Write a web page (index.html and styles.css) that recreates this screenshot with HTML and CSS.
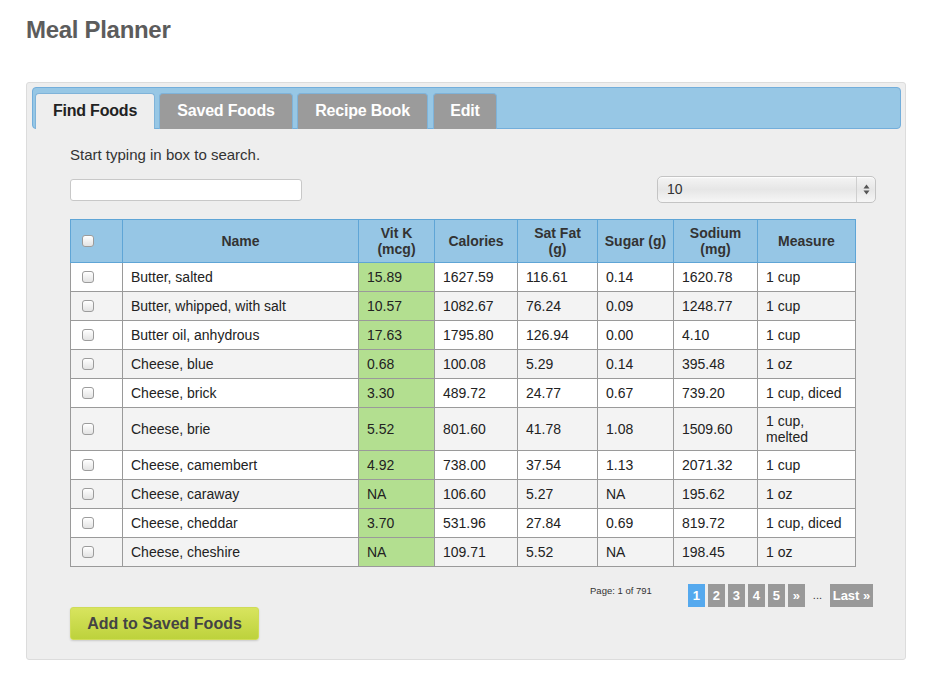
FILE: index.html
```html
<!DOCTYPE html>
<html>
<head>
<meta charset="utf-8">
<title>Meal Planner</title>
<link rel="stylesheet" href="styles.css">
</head>
<body>
<div class="page">
  <h1 class="title">Meal Planner</h1>
  <div class="panel">
    <div class="tabbar">
      <div class="tab active t-find">Find Foods</div>
      <div class="tab t-saved">Saved Foods</div>
      <div class="tab t-recipe">Recipe Book</div>
      <div class="tab t-edit">Edit</div>
    </div>
    <div class="content">
      <p class="hint">Start typing in box to search.</p>
      <div class="controls">
        <input class="search" type="text">
        <div class="select">
          <span class="select-value">10</span>
          <span class="select-arrows">
            <svg width="7" height="11" viewBox="0 0 7 11"><path d="M3.5 0.5 L6.5 4.5 L0.5 4.5 Z" fill="#555"/><path d="M3.5 10.5 L6.5 6.5 L0.5 6.5 Z" fill="#555"/></svg>
          </span>
        </div>
      </div>
      <table class="foods">
        <colgroup>
          <col class="c-check"><col class="c-name"><col class="c-vitk"><col class="c-cal"><col class="c-fat"><col class="c-sugar"><col class="c-sod"><col class="c-meas">
        </colgroup>
        <thead>
          <tr>
            <th class="chk"><input type="checkbox" class="cb"></th>
            <th>Name</th>
            <th>Vit K<br>(mcg)</th>
            <th>Calories</th>
            <th>Sat Fat<br>(g)</th>
            <th>Sugar (g)</th>
            <th>Sodium<br>(mg)</th>
            <th>Measure</th>
          </tr>
        </thead>
        <tbody>
          <tr><td class="chk"><input type="checkbox" class="cb"></td><td>Butter, salted</td><td class="vitk">15.89</td><td>1627.59</td><td>116.61</td><td>0.14</td><td>1620.78</td><td>1 cup</td></tr>
          <tr><td class="chk"><input type="checkbox" class="cb"></td><td>Butter, whipped, with salt</td><td class="vitk">10.57</td><td>1082.67</td><td>76.24</td><td>0.09</td><td>1248.77</td><td>1 cup</td></tr>
          <tr><td class="chk"><input type="checkbox" class="cb"></td><td>Butter oil, anhydrous</td><td class="vitk">17.63</td><td>1795.80</td><td>126.94</td><td>0.00</td><td>4.10</td><td>1 cup</td></tr>
          <tr><td class="chk"><input type="checkbox" class="cb"></td><td>Cheese, blue</td><td class="vitk">0.68</td><td>100.08</td><td>5.29</td><td>0.14</td><td>395.48</td><td>1 oz</td></tr>
          <tr><td class="chk"><input type="checkbox" class="cb"></td><td>Cheese, brick</td><td class="vitk">3.30</td><td>489.72</td><td>24.77</td><td>0.67</td><td>739.20</td><td>1 cup, diced</td></tr>
          <tr><td class="chk"><input type="checkbox" class="cb"></td><td>Cheese, brie</td><td class="vitk">5.52</td><td>801.60</td><td>41.78</td><td>1.08</td><td>1509.60</td><td>1 cup, melted</td></tr>
          <tr><td class="chk"><input type="checkbox" class="cb"></td><td>Cheese, camembert</td><td class="vitk">4.92</td><td>738.00</td><td>37.54</td><td>1.13</td><td>2071.32</td><td>1 cup</td></tr>
          <tr><td class="chk"><input type="checkbox" class="cb"></td><td>Cheese, caraway</td><td class="vitk">NA</td><td>106.60</td><td>5.27</td><td>NA</td><td>195.62</td><td>1 oz</td></tr>
          <tr><td class="chk"><input type="checkbox" class="cb"></td><td>Cheese, cheddar</td><td class="vitk">3.70</td><td>531.96</td><td>27.84</td><td>0.69</td><td>819.72</td><td>1 cup, diced</td></tr>
          <tr><td class="chk"><input type="checkbox" class="cb"></td><td>Cheese, cheshire</td><td class="vitk">NA</td><td>109.71</td><td>5.52</td><td>NA</td><td>198.45</td><td>1 oz</td></tr>
        </tbody>
      </table>
      <div class="pager">
        <span class="page-info">Page: 1 of 791</span>
        <div class="pages">
          <span class="pg current">1</span>
          <span class="pg">2</span>
          <span class="pg">3</span>
          <span class="pg">4</span>
          <span class="pg">5</span>
          <span class="pg">&raquo;</span>
          <span class="dots">...</span>
          <span class="pg last">Last &raquo;</span>
        </div>
      </div>
      <button class="add-btn" type="button">Add to Saved Foods</button>
    </div>
  </div>
</div>
</body>
</html>
```

FILE: styles.css
```css
* { box-sizing: border-box; }
html, body { margin: 0; padding: 0; background: #fff; }
body { font-family: "Liberation Sans", Arial, Helvetica, sans-serif; color: #222; }

.page { padding: 16px 26px 0 26px; width: 932px; }

.title {
  margin: 0;
  font-size: 24px;
  line-height: 28px;
  font-weight: bold;
  color: #5c5c5c;
  letter-spacing: -0.3px;
}

.panel {
  margin-top: 38px;
  width: 880px;
  background: #eeeeee;
  border: 1px solid #dcdcdc;
  border-radius: 3px;
  padding: 4px 4px 19px 5px;
}

.tabbar {
  height: 42px;
  background: #97c7e5;
  border: 1px solid #73aedb;
  border-radius: 4px;
  padding: 5px 0 0 2px;
  display: flex;
  gap: 4px;
  align-items: flex-end;
}

.tab {
  height: 36px;
  margin-bottom: -1px;
  background: #9b9b9b;
  border: 1px solid #7fb3d9;
  border-bottom: none;
  border-radius: 4px 4px 0 0;
  color: #fff;
  font-weight: bold;
  font-size: 16px;
  line-height: 34px;
  text-align: center;
  letter-spacing: -0.2px;
}
.t-find { width: 120px; }
.t-saved { width: 134px; }
.t-recipe { width: 131px; }
.t-edit { width: 64px; margin-left: 1px; }
.tab.active {
  background: #eeeeee;
  color: #222;
}

.content { padding: 0 25px 0 38px; }

.hint {
  margin: 16px 0 0 0;
  font-size: 15px;
  line-height: 20px;
  color: #333;
}

.controls {
  margin-top: 11px;
  display: flex;
  justify-content: space-between;
  align-items: center;
  height: 27px;
}

.search {
  width: 232px;
  height: 22px;
  border: 1px solid #c8c8c8;
  border-radius: 3px;
  background: #fff;
  margin: 0;
  padding: 0 4px;
}

.select {
  width: 219px;
  height: 27px;
  border: 1px solid #c4c4c4;
  border-radius: 5px;
  background: linear-gradient(#f4f4f4, #e6e6e6 50%, #f6f6f6);
  display: flex;
  align-items: stretch;
  box-shadow: inset 0 1px 1px rgba(255,255,255,0.8);
}
.select-value {
  flex: 1;
  font-size: 14px;
  line-height: 25px;
  padding-left: 9px;
  color: #333;
}
.select-arrows {
  width: 19px;
  border-left: 1px solid #cfcfcf;
  display: flex;
  align-items: center;
  justify-content: center;
}

.foods {
  margin-top: 16px;
  border-collapse: collapse;
  table-layout: fixed;
  width: 785px;
  font-size: 14px;
  line-height: 16px;
}
.c-check { width: 52px; }
.c-name { width: 236px; }
.c-vitk { width: 76px; }
.c-cal { width: 83px; }
.c-fat { width: 80px; }
.c-sugar { width: 76px; }
.c-sod { width: 84px; }
.c-meas { width: 98px; }

.foods th {
  background: #96c6e5;
  border: 1px solid #5fa5d6;
  font-weight: bold;
  color: #333;
  padding: 5px 4px;
  height: 43px;
  text-align: center;
}
.foods td {
  border: 1px solid #9a9a9a;
  padding: 5px 8px;
  height: 29px;
  color: #222;
  vertical-align: middle;
}
.foods tbody tr:nth-child(odd) td { background: #fff; }
.foods tbody tr:nth-child(even) td { background: #f3f3f3; }
.foods tbody tr td.vitk { background: #b3df90; }
.foods .chk { text-align: left; padding-left: 11px; padding-right: 0; }

.cb {
  -webkit-appearance: none;
  appearance: none;
  margin: 0;
  display: block;
  width: 12px;
  height: 12px;
  border: 1px solid #9c9c9c;
  border-radius: 3px;
  background: linear-gradient(#ffffff, #e3e3e3);
  box-shadow: inset 0 1px 0 #fff;
}

.pager {
  margin-top: 17px;
  height: 23px;
  display: flex;
  justify-content: flex-end;
  align-items: flex-start;
  padding-right: 3px;
}
.page-info {
  font-size: 9.5px;
  line-height: 12px;
  margin-top: 1px;
  color: #333;
  margin-right: 36px;
}
.pages { display: flex; gap: 3px; align-items: center; }
.pg {
  height: 23px;
  min-width: 17px;
  background: #999999;
  color: #fff;
  font-weight: bold;
  font-size: 13px;
  line-height: 23px;
  text-align: center;
}
.pg.current { background: #55a9ee; }
.pg.last { width: 43px; }
.dots {
  font-size: 11px;
  color: #333;
  padding: 0 5px 0 5px;
  line-height: 23px;
}

.add-btn {
  display: block;
  margin: 0;
  width: 189px;
  height: 33px;
  border: 1px solid #cfdc58;
  border-radius: 3px;
  background: linear-gradient(#d8e45e, #bdd23c);
  box-shadow: 0 1px 2px rgba(0,0,0,0.15);
  font-family: "Liberation Sans", Arial, Helvetica, sans-serif;
  font-size: 16px;
  font-weight: bold;
  color: #444;
  padding: 0;
}
```
